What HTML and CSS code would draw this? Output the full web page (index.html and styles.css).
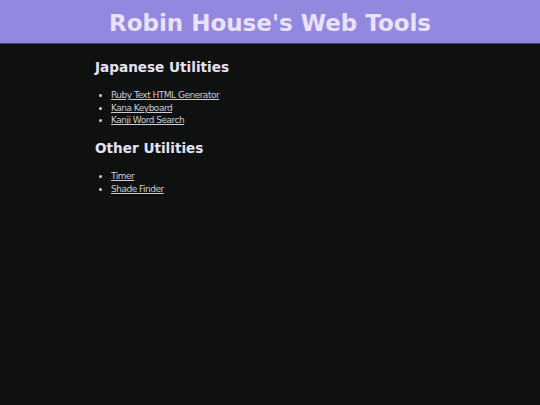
FILE: index.html
```html
<!DOCTYPE html>
<html>
<head>
<meta charset="utf-8">
<link rel="stylesheet" href="styles.css">
</head>
<body>
<header class="site-header">
  <h1 class="site-title">Robin House's Web Tools</h1>
</header>
<main class="content">
  <section class="group">
    <h2 class="group-title">Japanese Utilities</h2>
    <ul class="tool-list">
      <li><a href="#">Ruby Text HTML Generator</a></li>
      <li><a href="#">Kana Keyboard</a></li>
      <li><a href="#">Kanji Word Search</a></li>
    </ul>
  </section>
  <section class="group">
    <h2 class="group-title">Other Utilities</h2>
    <ul class="tool-list">
      <li><a href="#">Timer</a></li>
      <li><a href="#">Shade Finder</a></li>
    </ul>
  </section>
</main>
</body>
</html>
```

FILE: styles.css
```css
html, body {
  margin: 0;
  padding: 0;
  background: #0f1111;
  font-family: "DejaVu Sans", Verdana, sans-serif;
  color: #e4e0f4;
}
.site-header {
  background: #9388e0;
  height: 41px;
  padding-top: 2px;
  border-bottom: 1px solid #4a4470;
  display: flex;
  align-items: center;
  justify-content: center;
}
.site-title {
  margin: 0;
  font-size: 23px;
  font-weight: bold;
  color: #ebe2fa;
}
.content {
  width: 350px;
  margin: 0 auto;
  padding-top: 15px;
}
.group-title {
  margin: 0 0 14px;
  font-size: 13.6px;
  font-weight: bold;
  color: #e6e2f6;
}
.tool-list {
  margin: 0 0 13px;
  padding-left: 16px;
  font-size: 9px;
  letter-spacing: -0.5px;
  line-height: 12.7px;
  color: #d0cedc;
}
.tool-list a {
  color: #cccbd8;
}
```
